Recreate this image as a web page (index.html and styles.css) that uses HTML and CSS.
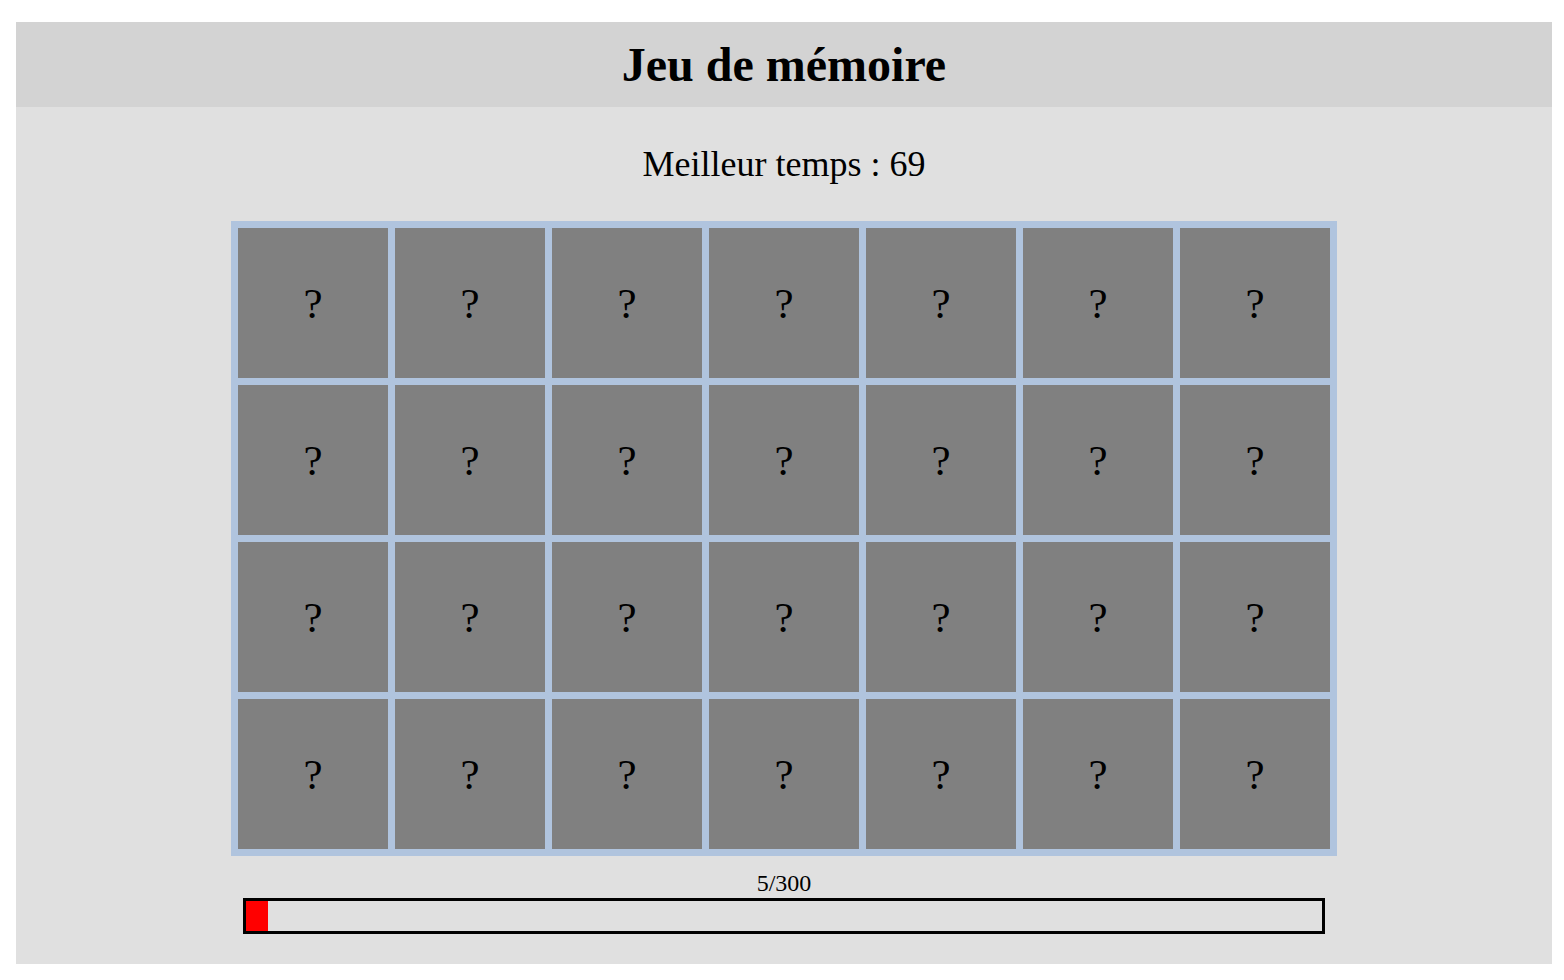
FILE: index.html
```html
<!DOCTYPE html>
<html lang="fr">
<head>
  <meta charset="UTF-8">
  <meta name="viewport" content="width=device-width, initial-scale=1.0">
  <title>Jeu de mémoire</title>
  <link rel="stylesheet" href="styles.css">
</head>
<body>
  <div class="jeu">
    <header class="jeu-entete">
      <h1>Jeu de mémoire</h1>
    </header>
    <p class="jeu-record">Meilleur temps : 69</p>
    <div class="plateau">
      <div class="carte">?</div><div class="carte">?</div><div class="carte">?</div><div class="carte">?</div><div class="carte">?</div><div class="carte">?</div><div class="carte">?</div>
      <div class="carte">?</div><div class="carte">?</div><div class="carte">?</div><div class="carte">?</div><div class="carte">?</div><div class="carte">?</div><div class="carte">?</div>
      <div class="carte">?</div><div class="carte">?</div><div class="carte">?</div><div class="carte">?</div><div class="carte">?</div><div class="carte">?</div><div class="carte">?</div>
      <div class="carte">?</div><div class="carte">?</div><div class="carte">?</div><div class="carte">?</div><div class="carte">?</div><div class="carte">?</div><div class="carte">?</div>
    </div>
    <div class="chrono">
      <div class="chrono-texte">5/300</div>
      <div class="chrono-barre">
        <div class="chrono-remplissage" style="width: 2%"></div>
      </div>
    </div>
  </div>
</body>
</html>
```

FILE: styles.css
```css
html, body {
  margin: 0;
  padding: 0;
  height: 100%;
}
body {
  box-sizing: border-box;
  padding: 22px 12px 16px 16px;
  font-family: "Liberation Serif", "Times New Roman", serif;
  color: #000;
  background: #fff;
}
.jeu {
  display: flex;
  flex-direction: column;
  align-items: center;
  height: 100%;
  background: #e0e0e0;
}
.jeu-entete {
  align-self: stretch;
  height: 85px;
  background: #d3d3d3;
  text-align: center;
}
.jeu-entete h1 {
  margin: 0;
  font-size: 48px;
  line-height: 85px;
  font-weight: bold;
}
.jeu-record {
  margin: 36px 0 36px;
  font-size: 36px;
}
.plateau {
  display: grid;
  grid-template-columns: repeat(7, 150px);
  grid-auto-rows: 150px;
  gap: 7px;
  padding: 7px;
  background: #b0c4de;
}
.carte {
  display: flex;
  align-items: center;
  justify-content: center;
  background: #808080;
  font-size: 43px;
}
.chrono {
  display: flex;
  flex-direction: column;
  align-items: center;
  margin-top: 14px;
}
.chrono-texte {
  font-size: 24px;
  line-height: normal;
  margin-bottom: 1px;
}
.chrono-barre {
  width: 1076px;
  height: 30px;
  border: 3px solid #000;
}
.chrono-remplissage {
  height: 100%;
  background: #f00;
}
```
